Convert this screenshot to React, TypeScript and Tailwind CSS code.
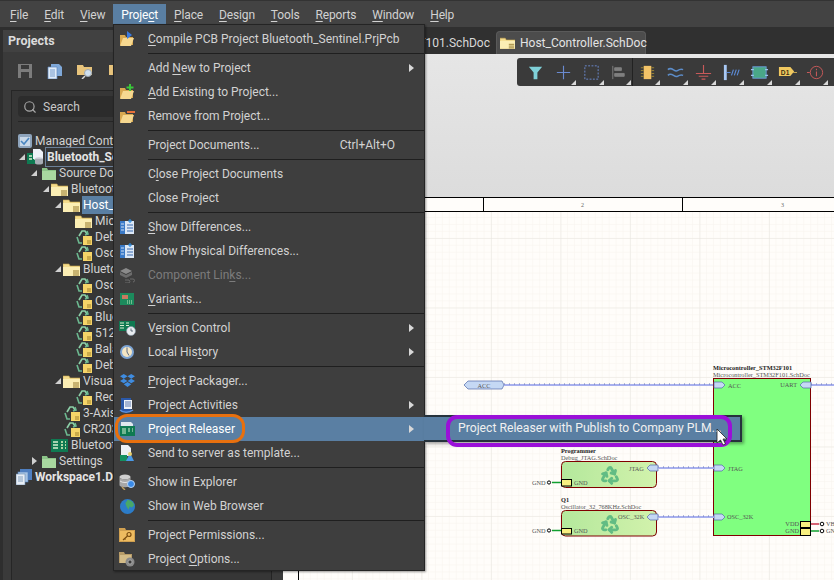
import React from "react";
import { Recycle, Search } from "lucide-react";

type Svg = { className?: string };

// small app icons, all on a 16 box
const FolderDoc = ({ className = "w-[17px] h-[13px]" }: Svg) => (
  <svg viewBox="0 0 17 13" className={`${className} shrink-0`}>
    <path d="M0 1h6l1 2h10v10H0z" fill="#f4dc8c" stroke="#c9a850" strokeWidth=".6" />
    <path d="M0 4h17v9H0z" fill="#fbeeb4" />
    <path d="M10 8h6M10 10h6M10 12h6" stroke="#8a6c20" strokeWidth=".9" />
  </svg>
);
const GreenFolder = () => (
  <svg viewBox="0 0 14 13" className="w-[14px] h-[13px] shrink-0">
    <path d="M0 1h5l1 2h8v10H0z" fill="#8cc488" />
    <path d="M0 4h14v9H0z" fill="#a8d8a0" />
  </svg>
);
const RecycleDoc = () => (
  <svg viewBox="0 0 16 16" className="w-4 h-4 shrink-0">
    <path d="M3 7l3-5h3l2 3" fill="none" stroke="#8ccfa8" strokeWidth="1.700" />
    <path d="M9 6l3-1-1-3M1 8l2 6h3" fill="none" stroke="#6cb890" strokeWidth="1.600" />
    <path d="M7 7h9v9H7z" fill="#f5d468" />
    <path d="M11 12h4M11 14h4" stroke="#8a6c20" strokeWidth=".8" />
  </svg>
);
const Pcb = ({ className = "w-[17px] h-[13px]" }: Svg) => (
  <svg viewBox="0 0 17 13" className={`${className} shrink-0`}>
    <rect width="17" height="13" fill="#0f7a52" />
    <path d="M2 3h5M2 6h5M2 9h5" stroke="#d8f0d0" strokeWidth="1.4" />
    <path d="M10 3h2M10 6h2M10 9h2M14 3h1M14 6h1M14 9h1" stroke="#e8f4c0" strokeWidth="1.4" />
  </svg>
);
const ProjectIcon = () => (
  <svg viewBox="0 0 17 16" className="w-[17px] h-4 shrink-0">
    <rect x="0" y="4" width="11" height="11" fill="#0f7a52" />
    <path d="M2 7h3M2 10h3M7 7h2M7 10h2" stroke="#d8f0d0" strokeWidth="1.3" />
    <path d="M6 0h7l3 3v7H6z" fill="#eef2f8" />
    <ellipse cx="12" cy="10" rx="4" ry="1.7" fill="#c8ccd4" />
    <path d="M8 10v4c0 2 8 2 8 0v-4" fill="#a8adb6" />
  </svg>
);
const Managed = () => (
  <svg viewBox="0 0 14 14" className="w-[14px] h-[14px] shrink-0">
    <rect width="14" height="14" rx="2" fill="#8ea4bc" />
    <rect x="2" y="3" width="10" height="9" fill="#c9d8e8" />
    <path d="M3 7l3 3 5-6" fill="none" stroke="#4a86c0" strokeWidth="1.6" />
  </svg>
);
const WorkspaceIcon = () => (
  <svg viewBox="0 0 16 16" className="w-4 h-4 shrink-0">
    <rect x="4" y="0" width="12" height="11" fill="#4f7fc0" />
    <rect x="2" y="3" width="10" height="10" fill="#a8c4e4" stroke="#4f7fc0" strokeWidth=".6" />
    <rect x="0" y="5" width="9" height="11" fill="#e8eef6" stroke="#6a8ab0" strokeWidth=".6" />
    <path d="M2 8h5M2 10h5M2 12h5" stroke="#6a8ab0" strokeWidth=".8" />
  </svg>
);
const OpenFolder = ({ children }: { children?: React.ReactNode }) => (
  <svg viewBox="0 0 16 16" className="w-4 h-4">
    <path d="M1 4h5l1 2h7v8H1z" fill="#d8a850" />
    <path d="M1 15l3-8h11l-3 8z" fill="#f6d890" />
    {children}
  </svg>
);
const DocDiff = () => (
  <svg viewBox="0 0 16 16" className="w-4 h-4">
    <path d="M1 2h14v13H1z" fill="#dce8f6" />
    <path d="M1 2h5v13H1z" fill="#3a7ac8" />
    <path d="M8 6h6M8 9h6M8 12h6" stroke="#3a6ab0" strokeWidth="1.1" />
    <path d="M2 5h3M2 8h3M2 11h3" stroke="#cfe0f4" strokeWidth="1" />
    <path d="M11 0v4M9 2h4" stroke="#2a8ae0" strokeWidth="1.2" />
  </svg>
);
const ComponentLinks = () => (
  <svg viewBox="0 0 16 16" className="w-4 h-4">
    <path d="M7 1l6 3-6 3-6-3z" fill="#8a8a8a" />
    <path d="M1 5l6 3v3L1 8zM13 5L7 8v3l6-3z" fill="#6c6c6c" />
    <path d="M6 13h4a2 2 0 010 3H6M11 12h3a1.500 1.500 0 010 3" fill="none" stroke="#707070" strokeWidth=".9" />
  </svg>
);
const Variants = () => (
  <svg viewBox="0 0 14 12" className="w-[14px] h-3">
    <rect width="14" height="12" fill="#1c8a5c" />
    <rect x="2" y="2" width="6" height="4" fill="#c87a60" />
    <path d="M7 8h6M7 10h6" stroke="#cce8c0" strokeWidth="1" strokeDasharray="1 1" />
  </svg>
);
const VersionControl = () => (
  <svg viewBox="0 0 17 16" className="w-[17px] h-4">
    <rect y="1" width="16" height="10" fill="#0f7a52" />
    <path d="M1 3h4M1 5.500h4M1 8h4M7 3h3M7 5.500h3" stroke="#d8f0d0" strokeWidth="1" />
    <circle cx="12" cy="11" r="4.500" fill="#e8ecf0" stroke="#8090a0" strokeWidth=".6" />
    <path d="M12 8.500V11h2" stroke="#405060" strokeWidth=".8" fill="none" />
  </svg>
);
const History = () => (
  <svg viewBox="0 0 14 14" className="w-[14px] h-[14px]">
    <circle cx="7" cy="7" r="7" fill="#7ca4d4" />
    <circle cx="7" cy="7" r="5" fill="#f4e6c4" />
    <path d="M7 2.500V7l2 3.500" stroke="#5c6c84" fill="none" strokeWidth="1" />
  </svg>
);
const Dropbox = () => (
  <svg viewBox="0 0 16 15" className="w-[15px] h-[14px]">
    <path d="M4 0l4 2.500L4 5 0 2.500zM12 0l4 2.500L12 5 8 2.500zM4 5l4 2.500L4 10 0 7.500zM12 5l4 2.500L12 10 8 7.500zM4 11l4-2.500 4 2.500-4 3z" fill="#3f8ce0" />
  </svg>
);
const Activities = () => (
  <svg viewBox="0 0 16 16" className="w-4 h-4">
    <path d="M2 1h10v14H2z" fill="#2a58a8" />
    <path d="M5 3h8v9H5z" fill="#eef2f8" />
    <path d="M6 5h6M6 7h6M6 9h6" stroke="#4a6ca8" strokeWidth=".9" />
    <path d="M1 13c3 3 9 3 13 0" stroke="#5a90e0" strokeWidth="1.5" fill="none" />
  </svg>
);
const Releaser = () => (
  <svg viewBox="0 0 16 16" className="w-4 h-4">
    <path d="M2 1h10l2 2v4H2z" fill="#dfe8ee" />
    <rect x="1" y="5" width="15" height="10" fill="#0f7a52" />
    <path d="M3 8h4M3 10h4M3 12h4M9 8h2M9 10h2M13 8h1M13 10h1" stroke="#d8f0d0" strokeWidth="1.1" />
  </svg>
);
const Template = () => (
  <svg viewBox="0 0 16 16" className="w-4 h-4">
    <path d="M2 0h7l3 3v8H2z" fill="#eef0f4" />
    <rect x="1" y="10" width="7" height="6" fill="#149060" />
    <path d="M11 8l4 8H7z" fill="#4a9ae8" />
    <circle cx="11" cy="9" r="2" fill="#e8d070" />
  </svg>
);
const Explorer = () => (
  <svg viewBox="0 0 16 16" className="w-4 h-4">
    <ellipse cx="6" cy="3" rx="5.500" ry="2.500" fill="#d0d0d0" />
    <path d="M.5 3v8c0 3 11 3 11 0V3c0 3-11 3-11 0z" fill="#a8a8a8" />
    <path d="M1 7c2 2 8 2 10 0" stroke="#e4e4e4" fill="none" />
    <circle cx="12" cy="10" r="3.500" fill="#3a8ae8" stroke="#b8d4f4" strokeWidth="1" />
    <path d="M3 13l3 3" stroke="#c0a060" strokeWidth="1.500" />
  </svg>
);
const Globe = () => (
  <svg viewBox="0 0 14 14" className="w-[15px] h-[15px]">
    <circle cx="7" cy="7" r="7" fill="#2c7cc8" />
    <path d="M7 1c3 0 6 2 6 5l-2 2-2-1-1 3-2-3-1-3z" fill="#48a868" />
  </svg>
);
const KeyFolder = () => (
  <svg viewBox="0 0 16 16" className="w-4 h-4">
    <path d="M0 1h6l1 2h9v12H0z" fill="#d0a050" />
    <rect x="1" y="4" width="14" height="10" fill="#eebb60" />
    <circle cx="10" cy="7.500" r="2" fill="none" stroke="#7a4c10" strokeWidth="1.200" />
    <path d="M8.500 9L4 13M5.500 11.500l1 1" stroke="#7a4c10" strokeWidth="1.200" />
  </svg>
);
const GearFolder = () => (
  <svg viewBox="0 0 16 16" className="w-4 h-4">
    <path d="M0 1h5l1 2h7v9H0z" fill="#b89c68" />
    <rect x="1" y="4" width="11" height="8" fill="#d4bc88" />
    <circle cx="11" cy="11" r="4.500" fill="#8a8a8a" />
    <circle cx="11" cy="11" r="2" fill="#3c3c3c" stroke="#c8c8c8" strokeWidth=".6" />
  </svg>
);

type Row =
  | { sep: true }
  | { label: string; icon?: React.ReactNode; more?: boolean; keys?: string; off?: boolean; hot?: boolean };

const menu: Row[] = [
  {
    label: "&Compile PCB Project Bluetooth_Sentinel.PrjPcb",
    icon: (
      <OpenFolder>
        <path d="M8 0l5 4-5 4z" fill="#3a7ae0" />
      </OpenFolder>
    ),
  },
  { sep: true },
  { label: "Add &New to Project", more: true },
  {
    label: "&Add Existing to Project...",
    icon: (
      <OpenFolder>
        <path d="M11 0v7M7.500 3.500h7" stroke="#3ac83a" strokeWidth="2" />
      </OpenFolder>
    ),
  },
  {
    label: "Remove from Project...",
    icon: (
      <OpenFolder>
        <path d="M8 4h8" stroke="#e8703a" strokeWidth="2" />
      </OpenFolder>
    ),
  },
  { sep: true },
  { label: "Project Documents...", keys: "Ctrl+Alt+O" },
  { sep: true },
  { label: "C&lose Project Documents" },
  { label: "Close Project" },
  { sep: true },
  { label: "&Show Differences...", icon: <DocDiff /> },
  { label: "Show Physical Differences...", icon: <DocDiff /> },
  { label: "Component Lin&ks...", icon: <ComponentLinks />, off: true },
  { label: "&Variants...", icon: <Variants /> },
  { sep: true },
  { label: "V&ersion Control", icon: <VersionControl />, more: true },
  { label: "Local His&tory", icon: <History />, more: true },
  { sep: true },
  { label: "&Project Packager...", icon: <Dropbox /> },
  { label: "Project Activities", icon: <Activities />, more: true },
  { label: "Project Releaser", icon: <Releaser />, more: true, hot: true },
  { label: "Send to server as template...", icon: <Template /> },
  { sep: true },
  { label: "Show in Explorer", icon: <Explorer /> },
  { label: "Show in Web Browser", icon: <Globe /> },
  { sep: true },
  { label: "Project Permissions...", icon: <KeyFolder /> },
  { label: "Project &Options...", icon: <GearFolder /> },
];

const Mnemonic = ({ text }: { text: string }) => {
  const i = text.indexOf("&");
  if (i < 0) return <>{text}</>;
  return (
    <>
      {text.slice(0, i)}
      <u className="underline-offset-2">{text[i + 1]}</u>
      {text.slice(i + 2)}
    </>
  );
};

const bar = ["&File", "&Edit", "&View", "Proje&ct", "&Place", "&Design", "&Tools", "&Reports", "&Window", "&Help"];

type Node = { depth: number; name: string; icon: React.ReactNode; arrow?: "open" | "shut"; bold?: boolean; sel?: boolean; box?: boolean };

const tree: Node[] = [
  { depth: 0, name: "Managed Content", icon: <Managed /> },
  { depth: 1, name: "Bluetooth_Sentinel.PrjPcb", icon: <ProjectIcon />, arrow: "open", bold: true, box: true },
  { depth: 2, name: "Source Documents", icon: <GreenFolder />, arrow: "open" },
  { depth: 3, name: "Bluetooth_Sentinel.SchDoc", icon: <FolderDoc />, arrow: "open" },
  { depth: 4, name: "Host_Controller", icon: <FolderDoc />, arrow: "open", sel: true },
  { depth: 5, name: "Microcontroller", icon: <FolderDoc /> },
  { depth: 5, name: "Debug_JTAG", icon: <RecycleDoc /> },
  { depth: 5, name: "Oscillator_32", icon: <RecycleDoc /> },
  { depth: 4, name: "Bluetooth_Module", icon: <FolderDoc />, arrow: "open" },
  { depth: 5, name: "Oscillator_1", icon: <RecycleDoc /> },
  { depth: 5, name: "Oscillator_2", icon: <RecycleDoc /> },
  { depth: 5, name: "Bluetooth", icon: <RecycleDoc /> },
  { depth: 5, name: "512K_Flash", icon: <RecycleDoc /> },
  { depth: 5, name: "Balanced", icon: <RecycleDoc /> },
  { depth: 5, name: "Debug_UART", icon: <RecycleDoc /> },
  { depth: 4, name: "Visual_Feedback", icon: <FolderDoc />, arrow: "open" },
  { depth: 5, name: "Red_LED", icon: <RecycleDoc /> },
  { depth: 4, name: "3-Axis_Accel", icon: <RecycleDoc /> },
  { depth: 4, name: "CR2032", icon: <RecycleDoc /> },
  { depth: 3, name: "Bluetooth_Sentinel.PcbDoc", icon: <Pcb /> },
  { depth: 2, name: "Settings", icon: <GreenFolder />, arrow: "shut" },
  { depth: 0, name: "Workspace1.DsnWrk", icon: <WorkspaceIcon />, bold: true },
];

const Corner = () => (
  <svg viewBox="0 0 5 5" className="absolute right-[1px] bottom-[1px] w-[5px] h-[5px]">
    <path d="M5 0v5H0z" fill="#d8d8d8" />
  </svg>
);

const tools: { key: string; corner: boolean; draw: React.ReactNode }[] = [
  { key: "filter", corner: false, draw: <path d="M3 4h14l-5 6v7H8v-7z" fill="#7fd0d8" /> },
  { key: "cross", corner: true, draw: <path d="M10 3v14M3 10h14" stroke="#6a8ad0" strokeWidth="1.200" /> },
  { key: "select", corner: true, draw: <rect x="3" y="3" width="14" height="14" fill="none" stroke="#6a8ad0" strokeDasharray="2 1.500" /> },
  { key: "align", corner: true, draw: <path d="M4 3v14M6 5h7v3H6zM6 11h10v3H6z" stroke="#808080" fill="#808080" /> },
  { key: "chip", corner: true, draw: <g><rect x="6" y="3" width="8" height="14" fill="#f4c468" /><path d="M3 5h3M3 8h3M3 11h3M3 14h3M14 5h3M14 8h3M14 11h3M14 14h3" stroke="#a08838" /></g> },
  { key: "wave", corner: true, draw: <path d="M2 7c4-4 7 3 10 1s4-2 6-1M2 13c4-4 7 3 10 1s4-2 6-1" stroke="#5c8cc8" strokeWidth="1.600" fill="none" /> },
  { key: "ground", corner: true, draw: <path d="M10 2v9M2 11h16M5 14h10M8 17h4" stroke="#c85a5a" strokeWidth="1.200" /> },
  { key: "bus", corner: true, draw: <g><rect x="2" y="2" width="3" height="16" fill="#a8c8f4" /><path d="M5 10h4M10 13l2-6M13 13l2-6M16 13l2-6" stroke="#5c8cd8" strokeWidth="1.200" /></g> },
  { key: "sheet", corner: true, draw: <g><rect x="3" y="4" width="14" height="12" fill="#4aa888" stroke="#6a9ad8" /><path d="M1 7h3M1 13h3M16 7h3M16 13h3" stroke="#9cc4f0" strokeWidth="1.400" /></g> },
  { key: "tag", corner: true, draw: <g><path d="M1 4h12l4 6-4 6H1z" fill="#f0c860" transform="translate(0 1) scale(1 .8)" /><text x="3" y="13" fontSize="7" fontWeight="700" fill="#403010" fontFamily="Liberation Sans, sans-serif">D1</text><path d="M16 10h4" stroke="#c8a850" /></g> },
  { key: "info", corner: true, draw: <g><circle cx="11" cy="10" r="6.500" fill="none" stroke="#c85a5a" /><path d="M11 9v5M11 6v1.500M1 10h3" stroke="#c85a5a" strokeWidth="1.100" /></g> },
];

const Tri = () => (
  <svg viewBox="0 0 5 8" className="w-[5px] h-2">
    <path d="M0 0l5 4-5 4z" fill="#d8d8d8" />
  </svg>
);

const serif = "Liberation Serif, serif";

const Port = ({ x, y, dir }: { x: number; y: number; dir: "r" | "l" }) => (
  <path
    d={dir === "r" ? `M${x} ${y - 3}h8l3 3-3 3h-8z` : `M${x + 11} ${y - 3}h-8l-3 3 3 3h8z`}
    fill="#c5d8f4"
    stroke="#5068a8"
    strokeWidth=".7"
  />
);

const Bus = ({ x1, x2, y }: { x1: number; x2: number; y: number }) => (
  <g>
    <line x1={x1} x2={x2} y1={y} y2={y} stroke="#a8b0ee" strokeWidth="2" />
    <line x1={x1} x2={x2} y1={y - 1} y2={y - 1} stroke="#6c78b8" strokeWidth="1" strokeDasharray="1 4" />
  </g>
);

const Label = ({ x, y, children, bold, end }: { x: number; y: number; children: string; bold?: boolean; end?: boolean }) => (
  <text x={x} y={y} fontSize="6.300" fontWeight={bold ? 700 : 400} fontFamily={serif} fill={bold ? "#222" : "#555"} textAnchor={end ? "end" : "start"}>
    {children}
  </text>
);

function Schematic() {
  return (
    <svg viewBox="283 197 551 383" className="block w-full h-full bg-[#fffdfa]">
      <defs>
        <pattern id="minor" x="283" y="211" width="6.950" height="6.950" patternUnits="userSpaceOnUse">
          <path d="M6.950 0V6.950H0" fill="none" stroke="#f8f4ee" strokeWidth="1" />
        </pattern>
        <pattern id="major" x="283.500" y="100" width="69.500" height="69.500" patternUnits="userSpaceOnUse">
          <path d="M69.500 0V69.500H0" fill="none" stroke="#e8e5df" strokeWidth="1" />
        </pattern>
        <linearGradient id="sheetFill" x1="0" x2="1">
          <stop offset="0" stopColor="#b4e89c" />
          <stop offset="1" stopColor="#d2f2ac" />
        </linearGradient>
      </defs>
      <rect x="298" y="211" width="536" height="369" fill="url(#minor)" />
      <rect x="298" y="211" width="536" height="369" fill="url(#major)" />
      <path d="M283 197.500H834M298 211.500H834M298.500 197V580M483.500 197v14M682.500 197v14" stroke="#000" strokeWidth="1" fill="none" />
      <text x="581" y="207" fontSize="6" fill="#666" fontFamily={serif}>2</text>
      <text x="781" y="207" fontSize="6" fill="#666" fontFamily={serif}>3</text>

      <path d="M464 385l4-4h34l2 4-2 4h-34z" fill="#c5d8f4" stroke="#5068a8" strokeWidth=".7" />
      <text x="484" y="388" fontSize="6.300" fontFamily={serif} fill="#555" textAnchor="middle">ACC</text>
      <Bus x1={504} x2={714} y={385} />
      <Bus x1={811} x2={834} y={385} />

      <Label x={713} y={370} bold>Microcontroller_STM32F101</Label>
      <Label x={713} y={377}>Microcontroller_STM32F101.SchDoc</Label>
      <rect x="713.500" y="378.500" width="97" height="157" fill="#80ff80" stroke="#800000" />
      <Port x={714} y={385} dir="r" />
      <Port x={800} y={385} dir="l" />
      <Port x={714} y={468} dir="r" />
      <Port x={714} y={517} dir="r" />
      <Label x={728} y={388}>ACC</Label>
      <Label x={797} y={387} end>UART</Label>
      <Label x={728} y={471}>JTAG</Label>
      <Label x={727} y={519}>OSC_32K</Label>
      <Label x={799} y={526} end>VDD</Label>
      <Label x={799} y={533} end>GND</Label>
      <rect x="800.500" y="521.500" width="10" height="6" fill="#f8f080" stroke="#000" />
      <rect x="800.500" y="528.500" width="10" height="7" fill="#f8f080" stroke="#000" />
      <path d="M811 524h8" stroke="#c83048" strokeWidth="1.500" />
      <path d="M811 531h8" stroke="#10a030" strokeWidth="1.500" />
      <circle cx="822" cy="524" r="1.800" fill="#fff" stroke="#000" />
      <circle cx="822" cy="531" r="1.800" fill="#fff" stroke="#000" />
      <Label x={826} y={526}>VB</Label>
      <Label x={826} y={533}>GN</Label>

      <Label x={561} y={453} bold>Programmer</Label>
      <Label x={561} y={460}>Debug_JTAG.SchDoc</Label>
      <rect x="561.500" y="461.500" width="95" height="26" rx="4" fill="url(#sheetFill)" stroke="#800000" />
      <Recycle x={600} y={465} width={20} height={20} stroke="#62bc84" strokeWidth={3.500} />
      <Label x={629} y={471}>JTAG</Label>
      <Port x={647} y={468} dir="l" />
      <Bus x1={658} x2={714} y={468} />
      <rect x="561.500" y="479.500" width="10" height="6.500" fill="#f8f080" stroke="#000" />
      <Label x={574} y={485}>GND</Label>
      <Label x={532} y={485}>GND</Label>
      <circle cx="549" cy="482.500" r="1.600" fill="#fff" stroke="#000" />
      <path d="M552 482.500h9" stroke="#10a030" strokeWidth="1.500" />

      <Label x={561} y={502} bold>Q1</Label>
      <Label x={561} y={509}>Oscillator_32_768KHz.SchDoc</Label>
      <rect x="561.500" y="510.500" width="95" height="25.500" rx="4" fill="url(#sheetFill)" stroke="#800000" />
      <Recycle x={600} y={514} width={20} height={20} stroke="#62bc84" strokeWidth={3.500} />
      <Label x={618} y={519}>OSC_32K</Label>
      <Port x={647} y={517} dir="l" />
      <Bus x1={658} x2={714} y={517} />
      <rect x="561.500" y="528.500" width="10" height="5.500" fill="#f8f080" stroke="#000" />
      <Label x={574} y={533}>GND</Label>
      <Label x={532} y={533}>GND</Label>
      <circle cx="549" cy="530.500" r="1.600" fill="#fff" stroke="#000" />
      <path d="M552 530.500h9" stroke="#10a030" strokeWidth="1.500" />
    </svg>
  );
}

export default function App() {
  return (
    <div className="relative w-[834px] h-[580px] overflow-hidden flex flex-col bg-[#2e2e2e] text-[12px] text-[#d2d2d2] whitespace-nowrap font-['Roboto',sans-serif]">
      {/* menu bar */}
      <div className="h-[27px] shrink-0 flex items-start pt-[3px] pl-[2px] bg-[#434343] border-t border-[#333] tracking-[-0.15px]">
        {bar.map((b) => (
          <div key={b} className={`h-[21px] px-2 flex items-center ${b === "Proje&ct" ? "bg-[#5a7fa3] text-white" : ""}`}>
            <span><Mnemonic text={b} /></span>
          </div>
        ))}
      </div>

      <div className="flex flex-1 min-h-0">
        {/* projects panel */}
        <aside className="w-[272px] shrink-0 pl-[3px] pt-[3px] bg-[#2e2e2e] border-r border-[#242424] flex flex-col">
          <div className="h-[22px] flex items-center pl-[5px] bg-[#414141] font-bold text-[12.5px] text-[#dcdcdc] shrink-0">Projects</div>
          <div className="flex-1 flex flex-col bg-[#3a3a3a]">
            <div className="h-[38px] shrink-0 flex items-center gap-[15px] pl-[15px]">
              <svg viewBox="0 0 14 14" className="w-[14px] h-[14px]">
                <path d="M0 0h14v14H0z" fill="#7c7c7c" />
                <path d="M3 1h8v4H3zM3 8h8v6H3z" fill="#3a3a3a" />
              </svg>
              <svg viewBox="0 0 15 15" className="w-[15px] h-[15px]">
                <path d="M4 0h8l3 3v9H4z" fill="#7fa8d8" />
                <path d="M1 3h9v12H1z" fill="#e0ecf8" stroke="#5c88c0" strokeWidth=".7" />
                <path d="M3 6h5M3 8h5M3 10h5M3 12h5" stroke="#5c88c0" strokeWidth=".8" />
              </svg>
              <svg viewBox="0 0 17 15" className="w-[17px] h-[15px]">
                <path d="M0 1h6l1 2h8v8H0z" fill="#e8c47c" />
                <circle cx="11" cy="9" r="3.500" fill="#cfe0f0" stroke="#a0a8b0" />
                <path d="M8 12l-3 3" stroke="#d8d8d8" strokeWidth="1.500" />
              </svg>
              <svg viewBox="0 0 17 15" className="w-[17px] h-[15px]">
                <path d="M0 1h6l1 2h8v8H0z" fill="#e8c47c" />
                <circle cx="11" cy="10" r="4" fill="#909090" stroke="#444" />
              </svg>
            </div>
            <div className="flex-1 ml-[8px] border-l border-t border-[#262626] bg-[#363636] pl-[6px] pt-[5px]">
              <div className="h-[21px] flex items-center gap-[6px] pl-[5px] bg-[#2c2c2c] rounded-[4px] text-[#c8c8c8]">
                <Search size={14} strokeWidth={2} className="text-[#a8a8a8]" />
                Search
              </div>
              <div className="h-[5px] border-b border-[#262626]" />
              <div className="pt-[11px] -ml-[8px]">
                {tree.map((n) => (
                  <div
                    key={n.name}
                    className="h-4 flex items-center"
                    style={{ paddingLeft: n.depth * 12 }}
                  >
                    <span className="w-[8px] h-[8px] shrink-0 -ml-[4px] mr-[1px] flex items-center justify-center">
                      {n.arrow === "open" && (
                        <svg viewBox="0 0 6 6" className="w-[6px] h-[6px]"><path d="M6 0v6H0z" fill="#d0d0d0" /></svg>
                      )}
                      {n.arrow === "shut" && (
                        <svg viewBox="0 0 5 8" className="w-[5px] h-2"><path d="M0 0l5 4-5 4z" fill="#d0d0d0" /></svg>
                      )}
                    </span>
                    <span className="w-[18px] shrink-0 flex justify-end -ml-[1px] mr-[2px]">{n.icon}</span>
                    <span
                      className={`${n.bold ? "font-bold text-[#e4e4e4]" : ""} ${n.sel ? "bg-[#5a7fa3] text-white" : ""} ${n.box ? "outline outline-1 outline-[#6c8098]" : ""} px-[1px]`}
                    >
                      {n.name}
                    </span>
                  </div>
                ))}
              </div>
            </div>
          </div>
        </aside>
        <div className="w-[11px] shrink-0 bg-[#3a3a3a]" />

        {/* documents */}
        <main className="flex-1 min-w-0 flex flex-col">
          <div className="h-[27px] shrink-0 bg-[#303030] flex items-end justify-end pr-[188px]">
            <div className="h-[23px] pr-[6px] flex items-center text-[#d8d8d8]">Microcontroller_STM32F101.SchDoc</div>
            <div className="h-[23px] w-[150px] shrink-0 pl-[3px] flex items-center gap-[5px] bg-[#4c4c4c] rounded-t-[4px] text-[#e4e4e4] border-x border-t border-[#5a5a5a]">
              <FolderDoc className="w-[15px] h-[12px]" />
              Host_Controller.SchDoc
            </div>
          </div>
          <div className="h-[143px] shrink-0 pt-[4px] flex justify-end items-start bg-gradient-to-b from-[#e6e6e6] to-[#dcdcdc]">
            <div className="h-[28px] flex items-center pl-[4px] pr-[5px] bg-[#3a3a3a] rounded-l-[3px]">
              {tools.map((t) => (
                <div key={t.key} className={`relative w-[28px] h-[28px] flex items-center justify-center ${t.key === "align" ? "border-r border-[#222]" : ""}`}>
                  <svg viewBox="0 0 20 20" className="w-[19px] h-[19px]">{t.draw}</svg>
                  {t.corner && <Corner />}
                </div>
              ))}
            </div>
          </div>
          <div className="flex-1 min-h-0">
            <Schematic />
          </div>
        </main>
      </div>

      {/* project dropdown */}
      <div className="absolute left-[113px] top-[24px] w-[312px] h-[547px] pt-[2px] bg-[#3e3e3e] border border-[#242424] shadow-[1px_1px_2px_rgba(0,0,0,.4)]">
        {menu.map((m, i) =>
          "sep" in m ? (
            <div key={i} className="h-[5px] ml-[34px] flex items-center">
              <div className="h-px w-full bg-[#1f1f1f]" />
            </div>
          ) : (
            <div
              key={m.label}
              className={`h-6 flex items-center ${m.hot ? "bg-[#5a7fa3] text-white" : ""} ${m.off ? "text-[#7c7c7c]" : ""}`}
            >
              <span className="w-[34px] shrink-0 flex justify-center pr-[8px]">{m.icon}</span>
              <span className="flex-1"><Mnemonic text={m.label} /></span>
              {m.keys && <span className="mr-[29px]">{m.keys}</span>}
              {m.more && <span className="mr-[10px] flex"><Tri /></span>}
            </div>
          ),
        )}
      </div>

      {/* submenu */}
      <div className="absolute left-[424px] top-[415px] w-[318px] h-[27px] pl-[34px] flex items-center bg-[#5a7fa3] border-2 border-l-0 border-[#26323c] text-[12.2px] text-[#f0f0f0] shadow-[2px_2px_3px_rgba(0,0,0,.35)]">
        Project Releaser with Publish to Company PLM...
      </div>

      {/* callouts */}
      <div className="absolute left-[115px] top-[414px] w-[130px] h-[29px] rounded-[12px] border-[3.5px] border-[#e8700e]" />
      <div className="absolute left-[446px] top-[415px] w-[286px] h-[32px] rounded-[11px] border-4 border-[#9a10d8]" />

      {/* pointer */}
      <svg viewBox="0 0 12 18" className="absolute left-[716px] top-[428px] w-[12px] h-[18px]">
        <path d="M1 1v14l3.500-3 2.500 5 2.500-1-2.500-5H11z" fill="#fff" stroke="#222" strokeWidth=".8" />
      </svg>
    </div>
  );
}
